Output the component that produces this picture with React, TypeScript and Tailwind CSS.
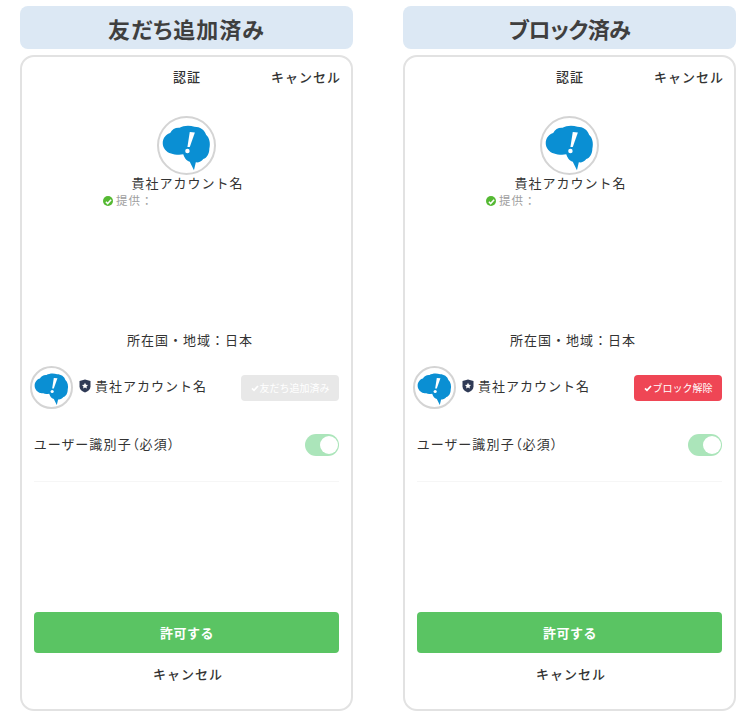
import * as React from "react";

function Mascot() {
  return (
    <svg viewBox="0 0 59 59" className="block h-full w-full">
      <path
        fill="#0a8fd3"
        d="M4 27C4 21 8 17 12 16C14 12 18 10 22 10.500C26 8 33 7.500 38 9.500C44 9.500 49 13 50.500 18C54 21 55.500 27 54 33C54 38 51.500 43 47.500 44C45.500 47 42 48 39.500 47.500L37.500 56L33 47C29 46 27 42 26 39C21 40 16 39 13 38C8 37 4 32 4 27Z"
      />
      <path fill="#fff" d="M33 15L38.500 15.500L33 31L30.500 31Z" />
      <circle cx="30.500" cy="35.500" r="2.400" fill="#fff" />
    </svg>
  );
}

function CheckMark({ className }: { className: string }) {
  return (
    <svg viewBox="0 0 12 12" className={className}>
      <path d="M1.500 6.500L4.500 9.500L10.500 3" fill="none" stroke="currentColor" strokeWidth="2.600" />
    </svg>
  );
}

function Panel({
  heading,
  headingClass,
  buttonLabel,
  buttonClass,
}: {
  heading: string;
  headingClass: string;
  buttonLabel: string;
  buttonClass: string;
}) {
  return (
    <div className="flex w-[333px] flex-col gap-[6px]">
      <div
        className={`flex h-[43px] items-center justify-center rounded-lg bg-[#dce8f4] text-[22px] leading-none font-bold text-[#3f3f3f] [font-feature-settings:'palt'] ${headingClass}`}
      >
        {heading}
      </div>
      <div className="flex h-[656px] flex-col rounded-[14px] border-2 border-[#e2e2e2] bg-white px-3 text-[13px] tracking-[1px] text-[#333]">
        <div className="mt-[10px] grid h-5 grid-cols-[1fr_auto_1fr] items-center font-medium">
          <span />
          <span className="pl-[1px]">認証</span>
          <span className="mr-[-2px] text-right">キャンセル</span>
        </div>

        <div className="mt-[29px] h-[59px] w-[59px] self-center rounded-full border-2 border-[#d4d4d4] bg-white">
          <Mascot />
        </div>
        <div className="mt-[-2px] h-5 pl-[2px] text-center leading-5">貴社アカウント名</div>
        <div className="mt-[-2px] ml-[69px] flex h-5 items-center gap-[3px] text-[11.500px] text-[#a0a0a0]">
          <span className="flex h-[10px] w-[10px] items-center justify-center rounded-full bg-[#55b933] text-white">
            <CheckMark className="h-[7px] w-[7px]" />
          </span>
          提供：
        </div>

        <div className="mt-[119px] h-5 pl-[7px] text-center leading-5">所在国・地域：日本</div>

        <div className="mt-[16px] flex h-[43px] items-center">
          <div className="ml-[-4px] h-[43px] w-[43px] rounded-full border-2 border-[#d4d4d4] bg-white">
            <Mascot />
          </div>
          <div className="mt-[-3px] ml-[6px] flex items-center gap-[4px]">
            <svg viewBox="0 0 12 14" className="h-[14px] w-[12px]">
              <path fill="#2f3a56" d="M6 0.500L11.500 2V7.500C11.500 10.500 9 12.500 6 13.500C3 12.500 0.500 10.500 0.500 7.500V2Z" />
              <path fill="#fff" d="M6 3.800L7 5.800L9 6.100L7.500 7.500L7.900 9.500L6 8.500L4.100 9.500L4.500 7.500L3 6.100L5 5.800Z" />
            </svg>
            <span>貴社アカウント名</span>
          </div>
          <div
            className={`ml-auto flex h-[26px] items-center justify-center gap-[1px] rounded text-[10px] tracking-normal text-white ${buttonClass}`}
          >
            <CheckMark className="h-2 w-2" />
            {buttonLabel}
          </div>
        </div>

        <div className="mt-[25px] flex h-[22px] items-center justify-between">
          <span className="mt-[-2px] tracking-[1.200px] [font-feature-settings:'palt']">ユーザー識別子（必須）</span>
          <div className="flex h-[22px] w-[34px] items-center justify-end rounded-full bg-[#abe5ba] pr-[1px]">
            <div className="h-[18px] w-[18px] rounded-full bg-white" />
          </div>
        </div>

        <div className="mt-[25px] h-px bg-[#f6f6f6]" />

        <div className="mt-[130px] flex h-[41px] items-center justify-center rounded bg-[#5ac463] pl-[1px] font-bold tracking-[0.500px] text-white">
          許可する
        </div>
        <div className="mt-[11px] h-5 pl-[3px] text-center leading-5 font-medium">キャンセル</div>
      </div>
    </div>
  );
}

export default function App() {
  return (
    <div className="flex h-[720px] w-[756px] gap-[50px] bg-white pt-[6px] pl-5 font-['Noto_Sans_CJK_JP',sans-serif]">
      <Panel
        heading="友だち追加済み"
        headingClass="tracking-[1px]"
        buttonLabel="友だち追加済み"
        buttonClass="w-[98px] bg-[#e8e8e8]"
      />
      <Panel
        heading="ブロック済み"
        headingClass="tracking-[-0.5px]"
        buttonLabel="ブロック解除"
        buttonClass="w-[88px] bg-[#ef4655]"
      />
    </div>
  );
}
